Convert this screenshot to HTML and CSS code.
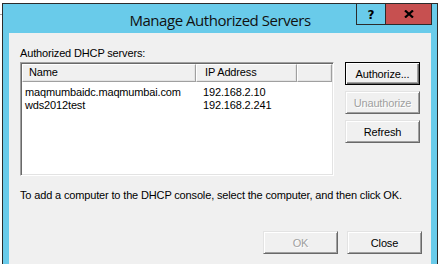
FILE: index.html
```html
<!DOCTYPE html>
<html>
<head>
<meta charset="utf-8">
<link rel="stylesheet" href="styles.css">
</head>
<body>
<div class="window">
  <div class="titlebar">
    <span class="title">Manage Authorized Servers</span>
    <div class="caption-buttons">
      <span class="cb help">?</span>
      <span class="cb close"><svg width="10" height="8" viewBox="0 0 10 8"><path d="M1 0.5 L9 7.5 M9 0.5 L1 7.5" stroke="#000" stroke-width="2.2" fill="none"/></svg></span>
    </div>
  </div>
  <div class="client">
    <div class="label">Authorized DHCP servers:</div>
    <div class="main-row">
      <div class="list">
        <div class="list-header">
          <div class="hcol c-name">Name</div>
          <div class="hcol c-ip">IP Address</div>
          <div class="hcol c-extra"></div>
        </div>
        <div class="list-body">
          <div class="list-row"><span class="c-name r">maqmumbaidc.maqmumbai.com</span><span class="c-ip r">192.168.2.10</span></div>
          <div class="list-row"><span class="c-name r">wds2012test</span><span class="c-ip r">192.168.2.241</span></div>
        </div>
      </div>
      <div class="side-buttons">
        <button class="btn default">Authorize...</button>
        <button class="btn disabled">Unauthorize</button>
        <button class="btn">Refresh</button>
      </div>
    </div>
    <p class="hint">To add a computer to the DHCP console, select the computer, and then click OK.</p>
    <div class="footer">
      <button class="btn disabled">OK</button>
      <button class="btn">Close</button>
    </div>
  </div>
</div>
</body>
</html>
```

FILE: styles.css
```css
* { box-sizing: border-box; }
html, body { margin: 0; height: 100%; }
body {
  padding: 3px 0 0 2px;
  background: #fff linear-gradient(#a0a0a0, #a0a0a0) no-repeat 0 14px / 2px 1px;
  font-family: "Liberation Sans", Arial, sans-serif;
  font-size: 11px;
  letter-spacing: -0.15px;
  color: #000;
  overflow: hidden;
}
.window {
  position: relative;
  width: 436px;
  height: 261px;
  background: #69cbea;
  border: 1px solid #2b2b2b;
  border-bottom: none;
  padding: 0 6px 0 6px;
  display: flex;
  flex-direction: column;
}
.titlebar {
  height: 29px;
  display: flex;
  align-items: center;
  justify-content: center;
  flex: none;
}
.title {
  font-family: "Open Sans", "Noto Sans", sans-serif;
  font-size: 15px;
  color: #111;
  margin-top: 2px;
  letter-spacing: -0.45px;
}
.caption-buttons {
  position: absolute;
  top: -1px;
  right: 5px;
  display: flex;
  height: 22px;
}
.cb {
  display: flex;
  align-items: center;
  justify-content: center;
  border: 1px solid #2b2b2b;
  height: 22px;
}
.help {
  width: 29px;
  border-right: none;
  font-family: "DejaVu Sans", sans-serif;
  font-weight: bold;
  font-size: 12px;
  padding-top: 1px;
}
.close {
  width: 47px;
  background: #c75050;
}
.client {
  flex: 1;
  background: #f0f0f0;
  padding: 14px 9px 0 11px;
}
.label {
  line-height: 13px;
  margin-bottom: 2px;
}
.main-row {
  display: flex;
  gap: 11px;
}
.list {
  width: 314px;
  height: 114px;
  background: #fff;
  border: 1px solid;
  border-color: #a0a0a0 #fff #fff #a0a0a0;
  box-shadow: inset 1px 1px #696969, inset -1px -1px #e3e3e3;
  padding: 1px 1px 0 1px;
}
.list-header {
  display: flex;
  height: 18px;
  background: #f0f0f0;
}
.hcol {
  border: 1px solid;
  border-color: #fff #a0a0a0 #a0a0a0 #fff;
  box-shadow: inset -1px -1px #e3e3e3;
  line-height: 15px;
  padding-left: 6px;
}
.hcol.c-name { width: 174px; }
.hcol.c-ip { width: 101px; padding-left: 8px; }
.hcol.c-extra { flex: 1; }
.list-body { padding-top: 4px; }
.list-row {
  display: flex;
  height: 13px;
  line-height: 13px;
}
.r.c-name { width: 181px; padding-left: 3px; }
.r.c-ip { width: 101px; }
.side-buttons {
  display: flex;
  flex-direction: column;
  gap: 6px;
}
.btn {
  width: 75px;
  height: 23px;
  font-family: "Liberation Sans", Arial, sans-serif;
  font-size: 11px;
  letter-spacing: -0.15px;
  color: #000;
  background: #f0f0f0;
  border: 1px solid;
  border-color: #e3e3e3 #696969 #696969 #e3e3e3;
  box-shadow: inset 1px 1px #fff, inset -1px -1px #a0a0a0;
  padding: 0;
  margin: 0;
}
.btn.default {
  border-color: #000;
  box-shadow: inset 1px 1px #fff, inset -1px -1px #696969, inset -2px -2px #a0a0a0;
}
.btn.disabled {
  color: #a0a0a0;
  text-shadow: 1px 1px #fff;
}
.hint {
  margin: 13px 0 0 0;
  line-height: 13px;
}
.footer {
  display: flex;
  justify-content: flex-end;
  gap: 9px;
  margin-top: 29px;
}
```
